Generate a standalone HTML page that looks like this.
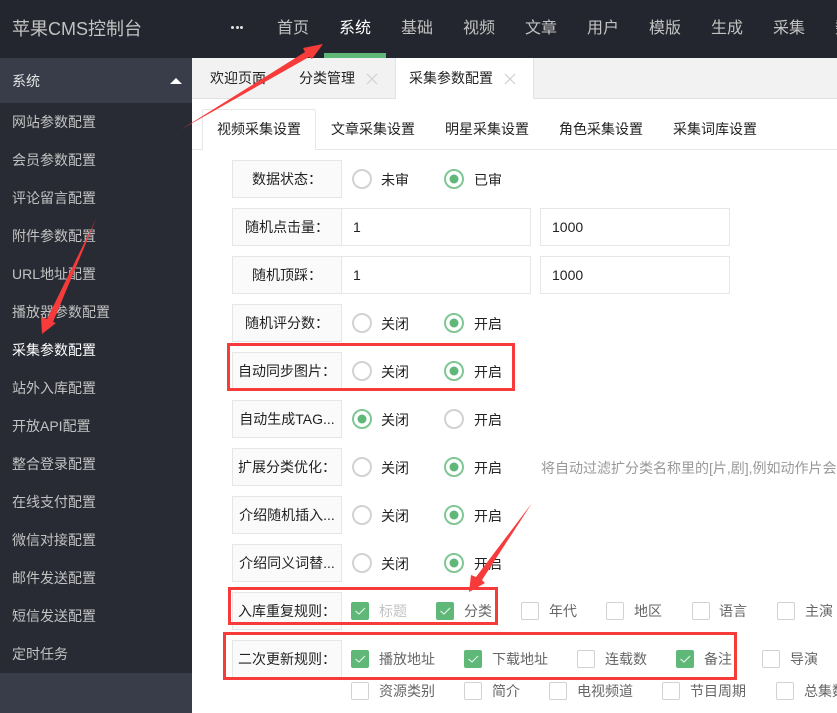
<!DOCTYPE html>
<html lang="zh-CN">
<head>
<meta charset="utf-8">
<title>苹果CMS控制台</title>
<style>
*{box-sizing:border-box;margin:0;padding:0}
html,body{width:837px;height:713px;overflow:hidden;background:#fff}
body{position:relative;font-family:"Liberation Sans","Noto Sans CJK SC",sans-serif;font-size:14px;color:#222}
.a,.t,.l,.i,.r,.c,.n,.s{position:absolute}
.t{white-space:nowrap;height:20px;line-height:20px}
#h{left:0;top:0;width:837px;height:58px;background:#23262e}
.n{top:18px;height:22px;line-height:22px;font-size:16px;color:#c2c2c2;white-space:nowrap;width:62px;text-align:center}
#sb{left:0;top:58px;width:192px;height:655px;background:#282b33}
.s{left:12px;height:20px;line-height:20px;color:#c2c2c2;white-space:nowrap}
.l{left:232px;width:110px;height:38px;line-height:36px;background:#fafafa;border:1px solid #e6e6e6;text-align:center;white-space:nowrap;color:#222}
.i{height:38px;line-height:36px;border:1px solid #e6e6e6;padding-left:10px;background:#fff;color:#222;font-size:14px}
.r{width:20px;height:20px;border-radius:50%;border:2px solid #d2d2d2;background:#fff;left:352px}
.r.on{border-color:#80c795}
.r.on::after{content:"";position:absolute;left:4px;top:4px;width:8px;height:8px;border-radius:50%;background:#5fb878;box-shadow:0 0 0 .5px #5fb878}
.c{width:18px;height:18px;border:1px solid #d2d2d2;border-radius:2px;background:#fff}
.c.on{background:#5fb878;border-color:#5fb878}
.c svg{position:absolute;left:0;top:0}
.g{color:#666}
.box{position:absolute;border:3px solid #f73a3a}
</style>
</head>
<body>
<div class="a" id="h"></div>
<div class="t" style="left:12px;top:17px;height:24px;line-height:24px;font-size:18px;color:#c2c2c2">苹果CMS控制台</div>
<div class="a" style="left:231px;top:26px;width:3px;height:3px;background:#e0e0e0;border-radius:50%"></div>
<div class="a" style="left:236px;top:26px;width:3px;height:3px;background:#e0e0e0;border-radius:50%"></div>
<div class="a" style="left:240px;top:26px;width:3px;height:3px;background:#e0e0e0;border-radius:50%"></div>
<div class="n" style="left:262px">首页</div>
<div class="n" style="left:324px;color:#fff">系统</div>
<div class="n" style="left:386px">基础</div>
<div class="n" style="left:448px">视频</div>
<div class="n" style="left:510px">文章</div>
<div class="n" style="left:572px">用户</div>
<div class="n" style="left:634px">模版</div>
<div class="n" style="left:696px">生成</div>
<div class="n" style="left:758px">采集</div>
<div class="n" style="left:820px">数据</div>
<div class="a" style="left:324px;top:53px;width:62px;height:5px;background:#5fb878"></div>

<div class="a" id="sb"></div>
<div class="a" style="left:0;top:58px;width:192px;height:45px;background:#393d49"></div>
<div class="a" style="left:0;top:673px;width:192px;height:40px;background:#393d49"></div>
<div class="s" style="top:71px;color:#e4e4e4">系统</div>
<div class="a" style="left:170px;top:78px;width:0;height:0;border-left:6px solid transparent;border-right:6px solid transparent;border-bottom:6px solid #fff"></div>
<div class="s" style="top:112px">网站参数配置</div>
<div class="s" style="top:150px">会员参数配置</div>
<div class="s" style="top:188px">评论留言配置</div>
<div class="s" style="top:226px">附件参数配置</div>
<div class="s" style="top:264px">URL地址配置</div>
<div class="s" style="top:302px">播放器参数配置</div>
<div class="s" style="top:340px;color:#fff">采集参数配置</div>
<div class="s" style="top:378px">站外入库配置</div>
<div class="s" style="top:416px">开放API配置</div>
<div class="s" style="top:454px">整合登录配置</div>
<div class="s" style="top:492px">在线支付配置</div>
<div class="s" style="top:530px">微信对接配置</div>
<div class="s" style="top:568px">邮件发送配置</div>
<div class="s" style="top:606px">短信发送配置</div>
<div class="s" style="top:644px">定时任务</div>

<div class="a" style="left:192px;top:58px;width:645px;height:41px;background:#f2f2f2;border-bottom:1px solid #e2e2e2"></div>
<div class="a" style="left:395px;top:58px;width:139px;height:41px;background:#fff;border-left:1px solid #e2e2e2;border-right:1px solid #e2e2e2"></div>
<div class="t" style="left:210px;top:68px">欢迎页面</div>
<div class="t" style="left:299px;top:68px">分类管理</div>
<div class="t" style="left:409px;top:68px">采集参数配置</div>
<svg class="a" style="left:366px;top:73px" width="12" height="12"><path d="M1 1L11 11M11 1L1 11" stroke="#d0d0d0" stroke-width="1.2" fill="none"/></svg>
<svg class="a" style="left:504px;top:73px" width="12" height="12"><path d="M1 1L11 11M11 1L1 11" stroke="#d0d0d0" stroke-width="1.2" fill="none"/></svg>

<div class="a" style="left:192px;top:149px;width:645px;height:1px;background:#e6e6e6"></div>
<div class="a" style="left:202px;top:109px;width:114px;height:41px;background:#fff;border:1px solid #e6e6e6;border-bottom:none;border-radius:2px 2px 0 0"></div>
<div class="t" style="left:217px;top:119px">视频采集设置</div>
<div class="t" style="left:331px;top:119px">文章采集设置</div>
<div class="t" style="left:445px;top:119px">明星采集设置</div>
<div class="t" style="left:559px;top:119px">角色采集设置</div>
<div class="t" style="left:673px;top:119px">采集词库设置</div>

<div class="l" style="top:160px">数据状态：</div>
<div class="r" style="top:169px"></div><div class="t" style="left:381px;top:170px">未审</div>
<div class="r on" style="top:169px;left:444px"></div><div class="t" style="left:474px;top:170px">已审</div>

<div class="l" style="top:208px">随机点击量：</div>
<div class="i" style="left:341px;top:208px;width:190px;padding-left:11px">1</div>
<div class="i" style="left:540px;top:208px;width:190px;padding-left:11px">1000</div>

<div class="l" style="top:256px">随机顶踩：</div>
<div class="i" style="left:341px;top:256px;width:190px;padding-left:11px">1</div>
<div class="i" style="left:540px;top:256px;width:190px;padding-left:11px">1000</div>

<div class="l" style="top:304px">随机评分数：</div>
<div class="r" style="top:313px"></div><div class="t" style="left:381px;top:314px">关闭</div>
<div class="r on" style="top:313px;left:444px"></div><div class="t" style="left:474px;top:314px">开启</div>

<div class="l" style="top:352px">自动同步图片：</div>
<div class="r" style="top:361px"></div><div class="t" style="left:381px;top:362px">关闭</div>
<div class="r on" style="top:361px;left:444px"></div><div class="t" style="left:474px;top:362px">开启</div>

<div class="l" style="top:400px">自动生成TAG...</div>
<div class="r on" style="top:409px"></div><div class="t" style="left:381px;top:410px">关闭</div>
<div class="r" style="top:409px;left:444px"></div><div class="t" style="left:474px;top:410px">开启</div>

<div class="l" style="top:448px">扩展分类优化：</div>
<div class="r" style="top:457px"></div><div class="t" style="left:381px;top:458px">关闭</div>
<div class="r on" style="top:457px;left:444px"></div><div class="t" style="left:474px;top:458px">开启</div>
<div class="t" style="left:541px;top:458px;color:#999">将自动过滤扩分类名称里的[片,剧],例如动作片会</div>

<div class="l" style="top:496px">介绍随机插入...</div>
<div class="r" style="top:505px"></div><div class="t" style="left:381px;top:506px">关闭</div>
<div class="r on" style="top:505px;left:444px"></div><div class="t" style="left:474px;top:506px">开启</div>

<div class="l" style="top:544px">介绍同义词替...</div>
<div class="r" style="top:553px"></div><div class="t" style="left:381px;top:554px">关闭</div>
<div class="r on" style="top:553px;left:444px"></div><div class="t" style="left:474px;top:554px">开启</div>

<div class="l" style="top:592px">入库重复规则：</div>
<div class="c on" style="left:351px;top:602px"><svg width="16" height="16"><path d="M3.5 8L7 11L13 5" stroke="#e8f5ec" stroke-width="1.1" fill="none"/></svg></div>
<div class="t" style="left:379px;top:601px;color:#c2c2c2">标题</div>
<div class="c on" style="left:436px;top:602px"><svg width="16" height="16"><path d="M3.5 8L7 11L13 5" stroke="#e8f5ec" stroke-width="1.1" fill="none"/></svg></div>
<div class="t g" style="left:464px;top:601px">分类</div>
<div class="c" style="left:521px;top:602px"></div><div class="t g" style="left:549px;top:601px">年代</div>
<div class="c" style="left:606px;top:602px"></div><div class="t g" style="left:634px;top:601px">地区</div>
<div class="c" style="left:692px;top:602px"></div><div class="t g" style="left:719px;top:601px">语言</div>
<div class="c" style="left:777px;top:602px"></div><div class="t g" style="left:805px;top:601px">主演</div>

<div class="l" style="top:640px">二次更新规则：</div>
<div class="c on" style="left:351px;top:650px"><svg width="16" height="16"><path d="M3.5 8L7 11L13 5" stroke="#e8f5ec" stroke-width="1.1" fill="none"/></svg></div>
<div class="t g" style="left:379px;top:649px">播放地址</div>
<div class="c on" style="left:464px;top:650px"><svg width="16" height="16"><path d="M3.5 8L7 11L13 5" stroke="#e8f5ec" stroke-width="1.1" fill="none"/></svg></div>
<div class="t g" style="left:492px;top:649px">下载地址</div>
<div class="c" style="left:577px;top:650px"></div><div class="t g" style="left:605px;top:649px">连载数</div>
<div class="c on" style="left:676px;top:650px"><svg width="16" height="16"><path d="M3.5 8L7 11L13 5" stroke="#e8f5ec" stroke-width="1.1" fill="none"/></svg></div>
<div class="t g" style="left:704px;top:649px">备注</div>
<div class="c" style="left:762px;top:650px"></div><div class="t g" style="left:790px;top:649px">导演</div>

<div class="c" style="left:351px;top:682px"></div><div class="t g" style="left:379px;top:681px">资源类别</div>
<div class="c" style="left:464px;top:682px"></div><div class="t g" style="left:492px;top:681px">简介</div>
<div class="c" style="left:549px;top:682px"></div><div class="t g" style="left:577px;top:681px">电视频道</div>
<div class="c" style="left:662px;top:682px"></div><div class="t g" style="left:690px;top:681px">节目周期</div>
<div class="c" style="left:776px;top:682px"></div><div class="t g" style="left:804px;top:681px">总集数</div>

<div class="box" style="left:227px;top:343px;width:288px;height:48px"></div>
<div class="box" style="left:228px;top:587px;width:270px;height:38px"></div>
<div class="box" style="left:223px;top:632px;width:514px;height:48px"></div>

<svg class="a" style="left:0;top:0" width="837" height="713">
<polygon fill="#f73a3a" points="181,129.5 305,52 303,48 323,44 312,59 309,57"/>
<polygon fill="#f73a3a" points="96,219 53,322 56,323 42,334 41,317 47,319"/>
<polygon fill="#f73a3a" points="532,503 482,580 485,583 469,592 471,575 476,577"/>
</svg>
</body>
</html>
